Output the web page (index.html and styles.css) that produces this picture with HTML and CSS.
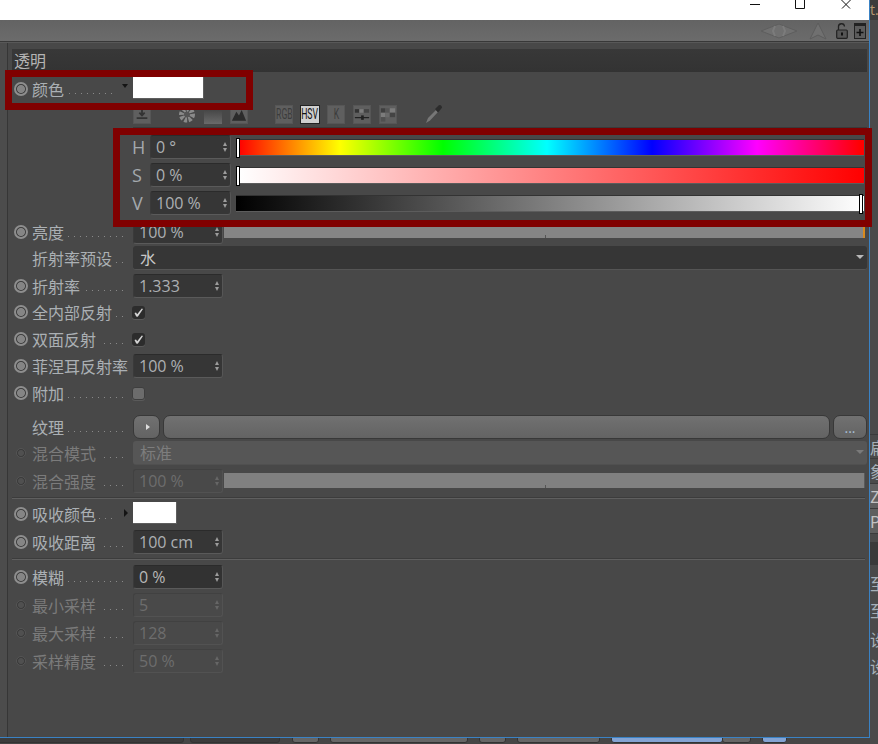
FILE: index.html
```html
<!DOCTYPE html>
<html lang="zh">
<head>
<meta charset="utf-8">
<title>透明</title>
<link rel="stylesheet" href="styles.css">
</head>
<body>
<div class="app">
  <div class="left">
    <div class="window">
      <div class="titlebar">
        <svg class="win-ico min" width="10" height="9" viewBox="0 0 10 9"><path d="M0 4.500H10" stroke="#111" fill="none"/></svg>
        <svg class="win-ico max" width="10" height="9" viewBox="0 0 10 9"><path d="M.5 0V8.500H9.500V0" stroke="#111" fill="none"/></svg>
        <svg class="win-ico cls" width="10" height="9" viewBox="0 0 10 9"><path d="M.5 0 9 8.500M9.500 0 1 8.500" stroke="#111" fill="none"/></svg>
      </div>
      <div class="toolbar">
        <svg class="tb-ico" width="38" height="16" viewBox="0 0 38 16"><path d="M1 8 19 1 37 8 19 15Z" fill="#707070" stroke="#5e5e5e"/><path d="M15 3 13 8 15 13M23 3 25 8 23 13" stroke="#7c7c7c" fill="none" stroke-width="2"/></svg>
        <svg class="tb-ico tri" width="18" height="18" viewBox="0 0 18 18"><path d="M9 1 17 17 9 13 1 17Z" fill="#707070" stroke="#5c5c5c"/></svg>
        <svg class="tb-ico lock" width="12" height="16" viewBox="0 0 12 16"><path d="M2.500 7V4a3 3 0 0 1 6-.500" stroke="#222" stroke-width="1.300" fill="none"/><rect x=".7" y="7" width="10.600" height="8.300" rx="1" fill="#555" stroke="#222" stroke-width="1.200"/><rect x="5" y="9.500" width="2" height="3" fill="#111"/></svg>
        <svg class="tb-ico plus" width="12" height="16" viewBox="0 0 12 16"><rect x=".5" y=".5" width="11" height="15" fill="#5c5c5c" stroke="#222"/><rect x="0" y="0" width="12" height="3" fill="#222"/><path d="M6 6V13M2.500 9.500H9.500" stroke="#111" stroke-width="1.600"/></svg>
      </div>
      <div class="workspace">
        <div class="panel">
          <div class="section-head">透明</div>

          <div class="row g5">
            <span class="slot"><i class="radio"></i></span>
            <span class="label"><span class="txt">颜色</span><b class="dots to-tri"></b><i class="tri-down"></i></span>
            <span class="swatch wide"></span>
          </div>

          <div class="picker-tools">
            <span class="tool t-load"><svg viewBox="0 0 18 18"><path d="M9 3V10M6 7 9 10 12 7M3 13H15" stroke="#333" stroke-width="2" fill="none"/></svg></span>
            <span class="tool-plain t-wheel"><svg viewBox="0 0 18 18"><circle cx="9" cy="9" r="6" fill="none" stroke="#8a8a8a" stroke-width="6" stroke-dasharray="3 1.500"/><circle cx="9" cy="9" r="3" fill="#555"/></svg></span>
            <span class="tool-plain t-grad"></span>
            <span class="tool t-mount"><svg viewBox="0 0 18 18"><path d="M1 16 6 6 9 10 12 4 17 16Z" fill="#2b2b2b"/></svg></span>
            <span class="tool t-rgb"><span class="squeeze">RGB</span></span>
            <span class="tool on"><span class="squeeze">HSV</span></span>
            <span class="tool t-k"><span class="squeeze">K</span></span>
            <span class="tool t-mix"><svg viewBox="0 0 18 18"><rect x="1" y="3" width="5" height="4" fill="#333"/><rect x="6" y="3" width="5" height="4" fill="#7c7c7c"/><rect x="11" y="3" width="6" height="4" fill="#444"/><path d="M1 12.500H17" stroke="#222" stroke-width="1.400"/><rect x="8" y="10" width="3" height="5" fill="#222"/></svg></span>
            <span class="tool t-swatches"><svg viewBox="0 0 18 18"><rect x="1" y="2" width="5" height="5" fill="#3f3f3f"/><rect x="6" y="2" width="5" height="5" fill="#555"/><rect x="11" y="2" width="6" height="5" fill="#7c7c7c"/><rect x="1" y="7" width="5" height="5" fill="#7c7c7c"/><rect x="6" y="7" width="5" height="5" fill="#6a6a6a"/><rect x="11" y="7" width="6" height="5" fill="#444"/><rect x="1" y="12" width="5" height="5" fill="#505050"/></svg></span>
            <span class="t-drop"><svg width="18" height="20" viewBox="0 0 18 20"><path d="M1 19 3 14 11 6 13 8 5 16.500Z" fill="#777"/><path d="M10 5 13.500 1.500Q15 .5 16.500 2T16 5L13 8.500Z" fill="#2c2c2c"/></svg></span>
          </div>
          <div class="picker-rule"></div>

          <div class="hsv-row g7">
            <span class="hsv-letter">H</span>
            <span class="field hsv-field">0 °<i class="spin"></i></span>
            <span class="track grad-h"><i class="handle start"></i></span>
          </div>
          <div class="hsv-row g4">
            <span class="hsv-letter">S</span>
            <span class="field hsv-field">0 %<i class="spin"></i></span>
            <span class="track grad-s"><i class="handle start"></i></span>
          </div>
          <div class="hsv-row g4">
            <span class="hsv-letter">V</span>
            <span class="field hsv-field">100 %<i class="spin"></i></span>
            <span class="track grad-v"><i class="handle end"></i></span>
          </div>

          <div class="row g5">
            <span class="slot"><i class="radio"></i></span>
            <span class="label"><span class="txt">亮度</span><b class="dots"></b></span>
            <span class="field num">100 %<i class="spin"></i></span>
            <span class="bar bright"><i class="tick"></i></span>
          </div>
          <div class="row g2">
            <span class="slot"></span>
            <span class="label"><span class="txt">折射率预设</span><b class="dots"></b></span>
            <span class="select">水<i class="caret"></i></span>
          </div>
          <div class="row g4">
            <span class="slot"><i class="radio"></i></span>
            <span class="label"><span class="txt">折射率</span><b class="dots"></b></span>
            <span class="field num">1.333<i class="spin"></i></span>
          </div>
          <div class="row g2">
            <span class="slot"><i class="radio"></i></span>
            <span class="label"><span class="txt">全内部反射</span><b class="dots"></b></span>
            <span class="check"><svg width="13" height="13" viewBox="0 0 13 13"><path d="M2.500 7 4 6.500 5.200 8.300 9.800 2.500 11 3 5.800 10.800 4.200 10.500Z" fill="#d4d4d4"/></svg></span>
          </div>
          <div class="row g3">
            <span class="slot"><i class="radio"></i></span>
            <span class="label"><span class="txt">双面反射</span><b class="dots"></b></span>
            <span class="check"><svg width="13" height="13" viewBox="0 0 13 13"><path d="M2.500 7 4 6.500 5.200 8.300 9.800 2.500 11 3 5.800 10.800 4.200 10.500Z" fill="#d4d4d4"/></svg></span>
          </div>
          <div class="row g3">
            <span class="slot"><i class="radio"></i></span>
            <span class="label"><span class="txt">菲涅耳反射率</span></span>
            <span class="field num">100 %<i class="spin"></i></span>
          </div>
          <div class="row g3">
            <span class="slot"><i class="radio"></i></span>
            <span class="label"><span class="txt">附加</span><b class="dots"></b></span>
            <span class="check off"></span>
          </div>
          <div class="row g10">
            <span class="slot"></span>
            <span class="label"><span class="txt">纹理</span><b class="dots"></b></span>
            <span class="btn play"><i class="play-tri"></i></span>
            <span class="btn long"></span>
            <span class="btn more">...</span>
          </div>
          <div class="row g2 dim">
            <span class="slot"><i class="radio small"></i></span>
            <span class="label"><span class="txt">混合模式</span><b class="dots"></b></span>
            <span class="select off">标准<i class="caret"></i></span>
          </div>
          <div class="row g4 dim">
            <span class="slot"><i class="radio small"></i></span>
            <span class="label"><span class="txt">混合强度</span><b class="dots"></b></span>
            <span class="field num off">100 %<i class="spin"></i></span>
            <span class="bar blend"><i class="tick"></i></span>
          </div>
          <div class="sep first"></div>
          <div class="row g3">
            <span class="slot"><i class="radio"></i></span>
            <span class="label"><span class="txt">吸收颜色</span><b class="dots to-tri"></b><i class="tri-right"></i></span>
            <span class="swatch narrow"></span>
          </div>
          <div class="row g4">
            <span class="slot"><i class="radio"></i></span>
            <span class="label"><span class="txt">吸收距离</span><b class="dots"></b></span>
            <span class="field num">100 cm<i class="spin"></i></span>
          </div>
          <div class="sep second"></div>
          <div class="row g5">
            <span class="slot"><i class="radio"></i></span>
            <span class="label"><span class="txt">模糊</span><b class="dots"></b></span>
            <span class="field num focus">0 %<i class="spin"></i></span>
          </div>
          <div class="row g4 dim">
            <span class="slot"><i class="radio small"></i></span>
            <span class="label"><span class="txt">最小采样</span><b class="dots"></b></span>
            <span class="field num off">5<i class="spin"></i></span>
          </div>
          <div class="row g4 dim">
            <span class="slot"><i class="radio small"></i></span>
            <span class="label"><span class="txt">最大采样</span><b class="dots"></b></span>
            <span class="field num off">128<i class="spin"></i></span>
          </div>
          <div class="row g4 dim">
            <span class="slot"><i class="radio small"></i></span>
            <span class="label"><span class="txt">采样精度</span><b class="dots"></b></span>
            <span class="field num off">50 %<i class="spin"></i></span>
          </div>
        </div>
      </div>
    </div>
    <div class="footer">
      <span class="fbtn dark f1"></span>
      <span class="fbtn dark f2"></span>
      <span class="fbtn f3"></span>
      <span class="fbtn f4"></span>
      <span class="fbtn f5"></span>
      <span class="fbtn f6"></span>
      <span class="fbtn blue f7"></span>
      <span class="fbtn f8"></span>
      <span class="fbtn blue f9"></span>
    </div>
  </div>
  <div class="side">
    <div class="side-top">t.</div>
    <div class="side-item s1">扁</div>
    <div class="side-item">象</div>
    <div class="side-item lit">Z</div>
    <div class="side-item lit">P</div>
    <div class="side-dark"></div>
    <div class="side-item s2">至</div>
    <div class="side-item s3">至</div>
    <div class="side-item s4">设</div>
    <div class="side-item s3">设</div>
  </div>
</div>
<div class="frame frame-color"></div>
<div class="frame frame-hsv"></div>
</body>
</html>
```
FILE: styles.css
```css
* { box-sizing: border-box; }
html, body { margin: 0; padding: 0; width: 878px; height: 744px; overflow: hidden; background: #484848; }
body { position: relative; font-family: "Noto Sans CJK SC", "Open Sans", sans-serif; color: #abb0b4; font-size: 16px; }
i, b { display: block; font-style: normal; }

.app { display: flex; width: 878px; height: 744px; }
.left { width: 870px; height: 744px; display: flex; flex-direction: column; flex: none; }
.window { height: 738px; border-right: 1px solid #3a82c4; border-bottom: 1px solid #3a82c4; display: flex; flex-direction: column; background: #484848; }

.titlebar { height: 20px; background: #fff; display: flex; flex: none; position: relative; padding-left: 750px; }
.win-ico { display: block; flex: none; }
.max { margin-left: 35px; }
.cls { margin-left: 36px; }

.toolbar { height: 23px; flex: none; background: linear-gradient(#636363, #6c6c6c); border-bottom: 1px solid #585858; box-shadow: inset 0 -1px 0 #383838; display: flex; align-items: flex-start; padding: 3px 0 0 760px; }
.tb-ico { display: block; flex: none; }
.tri { margin: -1px 0 0 11px; }
.lock { margin-left: 9px; }
.plus { margin-left: 6px; }

.workspace { flex: 1; min-height: 0; background: #4c4c4c; padding-left: 7px; }
.panel { height: 100%; background: #484848; border-left: 1px solid #363636; padding: 6px 2px 0 4px; overflow: hidden; }
.section-head { height: 23px; background: linear-gradient(#383838, #333); font-size: 16px; line-height: 23px; padding-left: 2px; color: #b4b4b4; }

.row { display: flex; align-items: center; height: 24px; padding-left: 2px; }
.g2 { margin-top: 2px; } .g3 { margin-top: 3px; } .g4 { margin-top: 4px; } .g5 { margin-top: 5px; } .g7 { margin-top: 7px; } .g10 { margin-top: 10px; }
.slot { width: 18px; flex: none; display: flex; align-items: center; }
.radio { width: 14px; height: 14px; border-radius: 50%; border: 2px solid #8e8e8e; background: radial-gradient(circle, #858585 0 3.600px, #3c3c3c 4.400px); }
.radio.small { width: 10px; height: 10px; margin-left: 2px; border: 1px solid #555; background: radial-gradient(circle, #505050 0 2.500px, #3a3a3a 3.500px); }
.label { width: 96px; flex: none; display: flex; align-items: center; position: relative; line-height: 24px; white-space: nowrap; margin-right: 5px; }
.txt { display: block; margin-top: -1px; }
.dots { flex: 1; height: 1px; margin: 9px 0 0 3px; background: linear-gradient(to right, #8a8a8a 1px, transparent 1px) right top / 6px 1px repeat-x; }
.dots.to-tri { margin-right: 11px; }
.dim { color: #7b7b7b; }
.tri-down { position: absolute; right: 0; top: 6px; border: 3px solid transparent; border-top: 4px solid #141414; border-bottom: 0; }
.tri-right { position: absolute; right: 0; top: 6px; border: 4px solid transparent; border-left: 4px solid #141414; border-right: 0; }

.swatch { display: block; background: #fff; border-right: 1px solid #5e5e5e; border-bottom: 1px solid #5e5e5e; height: 22px; align-self: flex-start; }
.swatch.wide { width: 71px; }
.swatch.narrow { width: 44px; }

.picker-tools { height: 20px; margin: 3px 0 0 121px; display: flex; align-items: center; font-family: "Roboto", sans-serif; }
.tool, .tool-plain { width: 18px; height: 19px; flex: none; display: flex; align-items: center; justify-content: center; }
.tool svg, .tool-plain svg { display: block; width: 16px; height: 17px; flex: none; }
.tool { background: #5f5f5f; border: 1px solid #565656; font-size: 14px; color: #3c3c3c; overflow: hidden; }
.squeeze { display: block; transform: scaleX(.62); white-space: nowrap; }
.t-wheel { margin-left: 27px; }
.t-grad { margin-left: 8px; background: linear-gradient(#3a3a3a, #6a6a6a); }
.t-mount { margin-left: 8px; }
.t-rgb { margin-left: 27px; }
.tool.on { width: 20px; margin-left: 7px; background: #cfcfcf; color: #111; border: 1px solid #222; }
.t-k { margin-left: 7px; }
.t-mix { margin-left: 8px; }
.t-swatches { margin-left: 8px; }
.t-drop { margin-left: 28px; display: block; height: 20px; }
.t-drop svg { display: block; }
.picker-rule { height: 1px; margin: 3px 0 0 121px; background: #3a3a3a; }

.hsv-row { display: flex; align-items: center; height: 24px; padding-left: 120px; }
.hsv-letter { width: 18px; flex: none; font-family: "Open Sans", sans-serif; font-size: 18px; color: #a4a9ad; }
.field { display: block; position: relative; flex: none; height: 24px; background: #363636; border: 1px solid; border-color: #2b2b2b #565656 #5a5a5a #3a3a3a; border-radius: 3px; font-family: "Open Sans", sans-serif; font-size: 16px; line-height: 22px; padding-left: 5px; color: #adb0b3; }
.hsv-field { width: 81px; }
.num { width: 90px; }
.num.focus { background: #323232; color: #b8b8b8; }
.num.off { background: #494949; border-color: #414141 #525252 #525252 #414141; color: #6d6d6d; }
.spin { position: absolute; right: 2px; top: 6px; width: 5px; height: 10px; }
.spin::before, .spin::after { content: ""; position: absolute; left: 0; border-left: 2.500px solid transparent; border-right: 2.500px solid transparent; }
.spin::before { top: 0; border-bottom: 4px solid #9c9c9c; }
.spin::after { bottom: 0; border-top: 4px solid #9c9c9c; }
.off .spin::before { border-bottom-color: #666; }
.off .spin::after { border-top-color: #666; }

.track { display: block; position: relative; flex: none; width: 628px; height: 17px; margin-left: 5px; border-top: 1px solid #333; border-bottom: 1px solid #5c5c5c; }
.grad-h { background: linear-gradient(to right, #f00 3px, #ff0 104px, #0f0 207px, #0ff 311px, #00f 416px, #f0f 521px, #f00 625px); }
.grad-s { background: linear-gradient(to right, #fff 3px, #f00 100%); }
.grad-v { background: linear-gradient(to right, #000, #fff); }
.handle { position: absolute; top: -2px; width: 4px; height: 20px; background: #fff; border: 1px solid #000; }
.handle.start { left: 0; }
.handle.end { right: 1px; }

.bar { display: block; position: relative; flex: 1; height: 18px; align-self: flex-start; background: #858585; margin: 0 2px 0 1px; }
.bright { border-right: 2px solid #d88a1d; }
.blend { height: 15px; margin-top: 4px; background: #808080; border-right: 1px solid #5a5a5a; }
.tick { position: absolute; left: 321px; bottom: 0; width: 1px; height: 3px; background: #555; }

.select { display: block; position: relative; flex: 1; height: 24px; background: #363636; border-radius: 3px; border-bottom: 1px solid #555; line-height: 22px; padding-left: 7px; color: #c8c8c8; font-size: 16px; }
.select.off { background: #565656; border-bottom-color: #505050; color: #7d7d7d; }
.caret { position: absolute; right: 3px; top: 9px; border-left: 4px solid transparent; border-right: 4px solid transparent; border-top: 4px solid #b8b8b8; }
.off .caret { border-top-color: #7a7a7a; }

.check { display: block; width: 13px; height: 13px; margin-left: -1px; background: #2c2c2c; border-radius: 3px; box-shadow: 0 1px 0 #5a5a5a; }
.check svg { display: block; }
.check.off { background: #6c6c6c; border: 1px solid #3e3e3e; }

.btn { display: flex; align-items: center; justify-content: center; flex: none; height: 24px; background: linear-gradient(#717171, #636363); border: 1px solid #383838; border-radius: 7px; }
.play { width: 27px; }
.long { width: 667px; margin-left: 3px; }
.more { width: 34px; margin-left: 3px; font-family: "Open Sans", sans-serif; font-size: 14px; line-height: 24px; color: #a9c0d8; padding-top: 2px; }
.play-tri { border: 3px solid transparent; border-left: 4px solid #ddd; border-right: 0; margin-left: 2px; }

.sep { height: 2px; margin-right: 2px; background: #5f5f5f; border-top: 1px solid #3c3c3c; }
.sep.first { margin-top: 4px; }
.sep.second { margin-top: 4px; }

.footer { flex: 1; position: relative; background: #464646; overflow: hidden; }
.fbtn { display: block; position: absolute; top: -4px; height: 9px; background: #666; border: 1px solid #333; border-radius: 3px; }
.dark { background: #3c3c3c; }
.f1 { left: -4px; width: 188px; }
.f2 { left: 190px; width: 90px; }
.f3 { left: 292px; width: 27px; }
.f4 { left: 330px; width: 138px; }
.f5 { left: 479px; width: 27px; }
.f6 { left: 517px; width: 83px; }
.blue { background: #84a4d4; }
.f7 { left: 611px; width: 112px; }
.f8 { left: 722px; width: 29px; }
.f9 { left: 762px; width: 25px; }

.side { flex: 1; min-width: 0; background: #4a4a4a; overflow: hidden; }
.side-top { height: 20px; font-family: "Open Sans", sans-serif; font-size: 14px; line-height: 20px; color: #b89a72; white-space: nowrap; margin-bottom: 414px; background: #3c3c3c; }
.side-item { height: 25px; line-height: 25px; font-size: 16px; white-space: nowrap; overflow: hidden; border-bottom: 1px solid #3b3b3b; color: #a6b0b8; }
.s1 { border-top: 1px solid #3b3b3b; }
.lit { background: #5f5f5f; color: #c2c2c2; }
.side-dark { height: 23px; margin-top: 8px; background: #3a3a3a; }
.s2 { border: 0; margin-top: 6px; }
.s3 { border: 0; margin-top: 2px; }
.s4 { border: 0; margin-top: 4px; }

.frame { position: absolute; border: 7px solid #800000; }
.frame-color { left: 5px; top: 70px; width: 248px; height: 40px; }
.frame-hsv { left: 113px; top: 128px; width: 759px; height: 99px; }
```
